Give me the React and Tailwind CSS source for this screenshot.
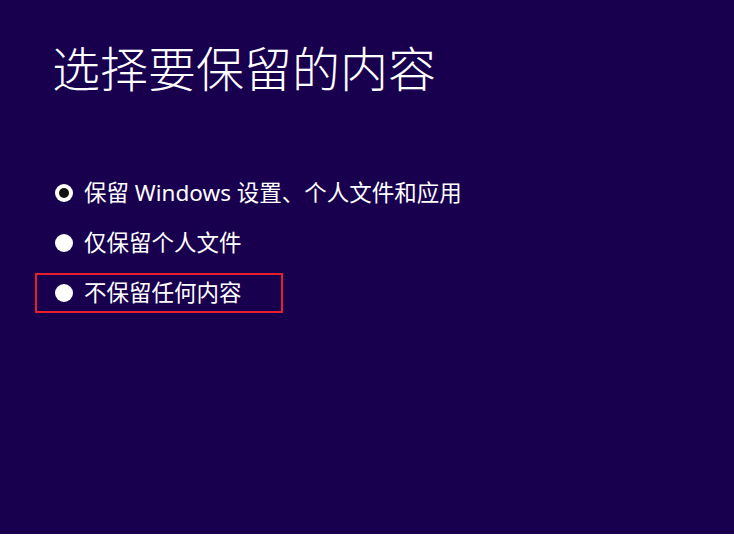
import React from "react";

const OPTIONS = [
  { label: "保留 Windows 设置、个人文件和应用", checked: true },
  { label: "仅保留个人文件", checked: false },
  { label: "不保留任何内容", checked: false, marked: true },
];

const Radio = ({ checked }) => (
  <span className="flex h-[18px] w-[18px] shrink-0 items-center justify-center rounded-full bg-white">
    {checked && <span className="h-[10px] w-[10px] rounded-full bg-[#111]" />}
  </span>
);

const App = () => {
  return (
    <div className="min-h-[546px] w-[734px] bg-white">
      <div
        className="h-[534px] bg-[#18004f] pl-[35px] pt-[42px] text-white"
        style={{ fontFamily: '"Noto Sans", "Noto Sans CJK SC", sans-serif' }}
      >
        <h1
          className="ml-[17px] text-[48px] leading-[48px] font-light"
          style={{ fontFamily: '"Noto Sans CJK SC", sans-serif' }}
        >
          选择要保留的内容
        </h1>
        <ul className="mt-[83px] flex flex-col gap-[10px]">
          {OPTIONS.map((opt) => (
            <li
              key={opt.label}
              className={`flex h-[40px] items-center gap-[11px] ${
                opt.marked ? "w-[248px] border-2 border-[#e3202c] pl-[18px]" : "pl-[20px]"
              }`}
            >
              <Radio checked={opt.checked} />
              <span className="text-[22.5px] leading-none whitespace-nowrap">
                {opt.label}
              </span>
            </li>
          ))}
        </ul>
      </div>
    </div>
  );
};

export default App;
